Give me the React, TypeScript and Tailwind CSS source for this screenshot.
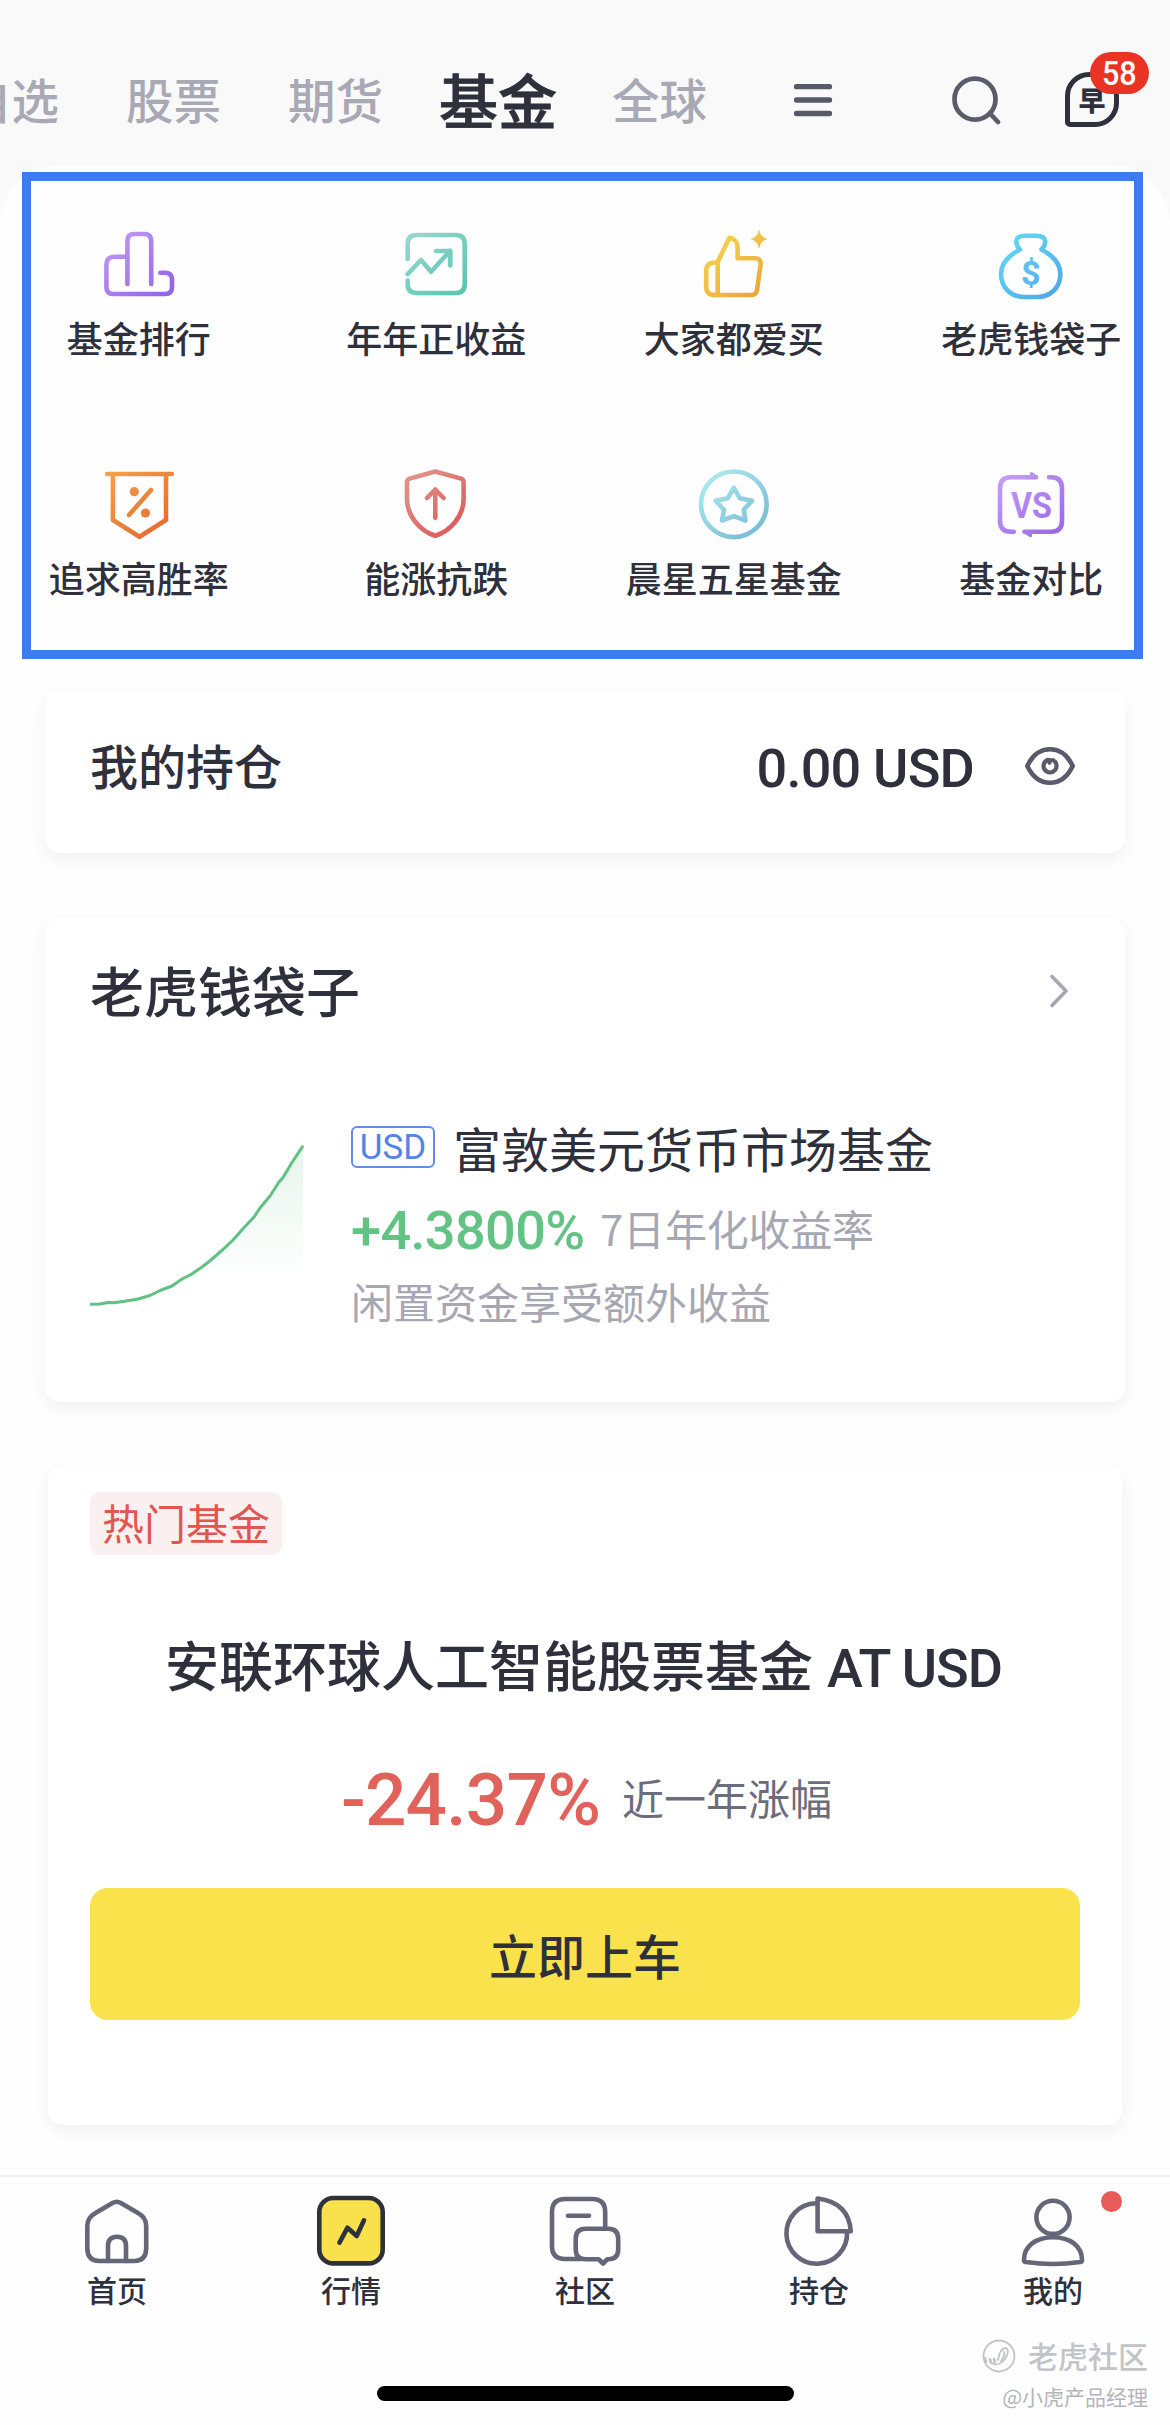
import type { ReactNode } from 'react';

const shortcuts = [
  { label: '基金排行', icon: 'rank', from: '#c09af6', to: '#9463e9' },
  { label: '年年正收益', icon: 'trend', from: '#98d7d0', to: '#56c6af' },
  { label: '大家都爱买', icon: 'thumb', from: '#f6da4e', to: '#eba43b' },
  { label: '老虎钱袋子', icon: 'bag', from: '#63dcf7', to: '#51a7e8' },
  { label: '追求高胜率', icon: 'percent', from: '#f2a04a', to: '#e4692d' },
  { label: '能涨抗跌', icon: 'shield', from: '#e0958c', to: '#dc5454' },
  { label: '晨星五星基金', icon: 'star', from: '#aeeaf1', to: '#74bbd3' },
  { label: '基金对比', icon: 'vs', from: '#c59df9', to: '#9a68e6' },
];

const drawings: Record<string, (paint: string) => ReactNode> = {
  rank: () => (
    <>
      <path d="M28.4 58V15q0-7 7-7h9.800q7 0 7 7V58" />
      <path d="M28.400 30.700H15.400q-8 0-8 8V61q0 7 7 7H66q7 0 7-7V53.700q0-7-7-7H61.300" />
    </>
  ),
  trend: () => (
    <>
      <path d="M11.700 33V18q0-9 9-9h39q9 0 9 9v40q0 9-9 9h-39q-9 0-9-9v-3.500" />
      <path d="M11.700 48 25 34l10 11.700 19.200-21M40 25h14.300v14.500" />
    </>
  ),
  thumb: (paint) => (
    <>
      <path d="M23.700 36 35.200 11.900c5 .5 8.400 4 8.400 9v11.400h17.400q6.300 0 5.600 6.200L63 64q-.6 5-5.600 5H20.700q-8.500 0-8.500-8.500V45q0-8.500 8.500-8.500h3V69" />
      <path d="M65 4.500q1.500 7 8 8.500-6.500 1.500-8 9-1.500-7.500-8-9 6.500-1.500 8-8.500z" fill={paint} stroke={paint} strokeWidth=".6" />
    </>
  ),
  bag: (paint) => (
    <>
      <path d="M29 23.500C23.500 17.500 23.500 9.700 34 9.700h11.500c10.500 0 10.500 7.800 5 13.800C63 30 69.400 38 69.400 48c0 14-10.400 23-23.400 23H33.500C20.500 71 10 62 10 48c0-10 6.500-18 19-24.500z" />
      <text x="39.800" y="59" fontSize="34" fontWeight="700" fontFamily="Roboto" textAnchor="middle" fill={paint} stroke="none">$</text>
    </>
  ),
  percent: (paint) => (
    <>
      <path d="M8.200 8h64.600M13.900 8v46l26.600 16.700L67 54V8M52 24 30 49" />
      <circle cx="35.300" cy="25.700" r="4.600" fill={paint} stroke="none" />
      <circle cx="46.400" cy="47" r="4.600" fill={paint} stroke="none" />
    </>
  ),
  shield: () => (
    <>
      <path d="M39.300 5.500 13.500 12.600q-2.500 1-2.500 3.500V33c0 17 13 32 28.300 36.700C54.500 65 67.600 50 67.600 33V16.100q0-2.500-2.500-3.500z" />
      <path d="M39.300 51.700V24M31 32l8.300-8.500 8.300 8.500" />
    </>
  ),
  star: () => (
    <>
      <circle cx="39.800" cy="38.300" r="32.800" />
      <path d="m39.800 21.700 5.900 10.500 12.300 2.500-8.300 9 1.800 10.800-11.700-4.300-11.700 4.300 1.800-10.800-8.300-9 12.300-2.500z" />
    </>
  ),
  vs: (paint) => (
    <>
      <path d="M45 11.300H20q-11 0-11 11v32.400q0 11 11 11h2.700M58 11.300h2q11 0 11 11v32.400q0 11-11 11H33.400" />
      <path d="M40.500 7.500 45.500 11.300h-5zM33.500 65.700h6v4z" fill={paint} strokeWidth="3" />
      <text x="20" y="52.300" fontSize="36" fontWeight="700" fontFamily="Roboto" textLength="41" lengthAdjust="spacingAndGlyphs" fill={paint} stroke="none">VS</text>
    </>
  ),
};

function ShortcutIcon({ name, from, to }: { name: string; from: string; to: string }) {
  const id = `grad-${name}`;
  const paint = `url(#${id})`;
  return (
    <svg width="80" height="80" viewBox="0 0 80 80" fill="none" stroke={paint} strokeWidth="4.6" strokeLinecap="round" strokeLinejoin="round">
      <defs>
        <linearGradient id={id} gradientUnits="userSpaceOnUse" x1="12" y1="8" x2="66" y2="70">
          <stop offset="0" stopColor={from} />
          <stop offset="1" stopColor={to} />
        </linearGradient>
      </defs>
      {drawings[name](paint)}
    </svg>
  );
}

function Header() {
  return (
    <header className="flex h-[165px] items-start pt-[66px] text-[47.5px] leading-[66px] text-[#a8a9b5]">
      <span className="-ml-[36px] w-24 shrink-0 font-medium">自选</span>
      <span className="ml-[66px] w-24 shrink-0 font-medium">股票</span>
      <span className="ml-[66px] w-24 shrink-0 font-medium">期货</span>
      <span className="ml-[55px] w-[119px] shrink-0 text-[59px] font-medium text-[#2e303b] [-webkit-text-stroke:0.8px_#2e303b]">基金</span>
      <span className="ml-[54px] w-24 shrink-0 font-medium">全球</span>
      <svg className="ml-[84px] mt-[14px] shrink-0" width="42" height="42" viewBox="0 0 42 42" stroke="#575967" strokeWidth="5.300" strokeLinecap="round">
        <path d="M4.500 6.700h33M4.500 20h33M4.500 33.500h33" />
      </svg>
      <svg className="ml-[116px] mt-[8px] shrink-0" width="54" height="54" viewBox="0 0 54 54" fill="none" stroke="#5a5c6b" strokeWidth="4.700" strokeLinecap="round">
        <circle cx="25" cy="25.200" r="20.500" />
        <path d="m40 39.500 8 8.500" />
      </svg>
      <div className="relative ml-[61px] mt-[6px] flex h-[55px] w-[54px] shrink-0 items-center justify-center rounded-[24px] rounded-bl-[5px] border-[5px] border-[#2e303b]">
        <span className="text-[27px] font-black leading-none text-[#2e303b]">早</span>
        <span className="absolute -top-[25px] left-[20px] flex h-[42px] w-[59px] items-center justify-center rounded-full bg-[#ea3323] text-white">
          <b className="scale-x-90 font-[Roboto] text-[34px] font-medium leading-none">58</b>
        </span>
      </div>
    </header>
  );
}

function Shortcuts() {
  return (
    <section className="ml-[22px] mr-[27px] mt-[6px] h-[487px] border-[9px] border-[#3c7cf0]">
      <div className="-ml-[41px] grid w-[1190px] grid-cols-4 gap-y-[80px] pt-[45px]">
        {shortcuts.map((item) => (
          <div key={item.label} className="flex h-[160px] flex-col items-center">
            <ShortcutIcon name={item.icon} from={item.from} to={item.to} />
            <span className="mt-[8px] text-[36px] font-medium leading-[46px]">{item.label}</span>
          </div>
        ))}
      </div>
    </section>
  );
}

function Holdings() {
  return (
    <section className="mx-[45px] mt-[31px] flex h-[163px] items-center rounded-[15px] bg-white pl-[45px] pr-[47px] pb-[12px] shadow-[0_6px_18px_rgba(0,0,0,0.06)]">
      <h2 className="pb-[3px] text-[48px] font-medium">我的持仓</h2>
      <span className="ml-auto pt-[6px] font-[Roboto] text-[54px] font-medium tracking-[-0.8px]">0.00 USD</span>
      <svg className="ml-[48px]" width="56" height="44" viewBox="0 0 56 44" fill="none" stroke="#595b6a" strokeWidth="4.600" strokeLinecap="round">
        <path d="M5.300 22C11 10 19 5.300 28 5.300S45 10 50.700 22C45 34 37 38.700 28 38.700S11 34 5.300 22z" strokeLinejoin="round" />
        <path d="M25.500 16a6.500 6.500 0 1 0 5.500.2M27.500 15.800v3" strokeWidth="4.200" />
      </svg>
    </section>
  );
}

function MoneyBag() {
  return (
    <section className="mx-[45px] mt-[65px] h-[484px] rounded-[15px] bg-white px-[45px] shadow-[0_6px_18px_rgba(0,0,0,0.06)]">
      <div className="flex h-[142px] items-center justify-between pr-[10px]">
        <h2 className="text-[54px] font-medium">老虎钱袋子</h2>
        <svg className="mt-[4px]" width="24" height="40" viewBox="0 0 24 40" fill="none" stroke="#a6a7b3" strokeWidth="3.600" strokeLinecap="round" strokeLinejoin="round">
          <path d="m6 5.500 14 14.500L6 34.500" />
        </svg>
      </div>
      <div className="mt-[62px] flex">
        <svg className="mt-[18px]" width="216" height="170" viewBox="0 0 216 170" fill="none">
          <defs>
            <linearGradient id="fund-fill" x1="0" y1="0" x2="0" y2="1">
              <stop offset="0" stopColor="#62c384" stopOpacity=".16" />
              <stop offset=".85" stopColor="#62c384" stopOpacity="0" />
            </linearGradient>
          </defs>
          <path d="M0 164 33 161.700 63 155 85 145 119 122.700 149 93.300 179 56.700 190 41.700 213 5.700V164z" fill="url(#fund-fill)" />
          <path
            d="M0 164.300 10 164 18 162.500 24 162.800 33 161.500 48 159 60 155.500 70 150.500 82 146 92 139 101 134.500 112 127 121 120 133 109.500 143 100 155 86.500 164 77 170 68 180 56 189 42 193 37.500 202 22.500 213 5.700"
            stroke="#5fc182"
            strokeWidth="3"
            strokeLinejoin="round"
          />
        </svg>
        <div className="ml-[45px]">
          <div className="flex h-[50px] items-center">
            <span className="flex h-[42px] w-[84px] items-center justify-center rounded-[6px] border-2 border-[#648bea] font-[Roboto] text-[35px] leading-none text-[#5482e8]">USD</span>
            <span className="ml-[18px] text-[48px] leading-[50px]">富敦美元货币市场基金</span>
          </div>
          <div className="mt-[32px] flex h-[50px] items-center">
            <span className="w-[249px] pt-[4px] font-[Roboto] text-[54px] font-medium leading-none tracking-[-0.6px] text-[#62c384]">+4.3800%</span>
            <span className="pb-[2px] text-[42px] leading-none tracking-[-0.2px] text-[#a6a7b3]">7日年化收益率</span>
          </div>
          <p className="mt-[20px] text-[42px] leading-[54px] text-[#a6a7b3]">闲置资金享受额外收益</p>
        </div>
      </div>
    </section>
  );
}

function HotFund() {
  return (
    <section className="mx-[48px] mt-[63px] flex h-[660px] flex-col items-center rounded-[15px] bg-white px-[42px] pt-[27px] shadow-[0_6px_18px_rgba(0,0,0,0.06)]">
      <span className="flex h-[63px] w-[192px] items-center justify-center self-start rounded-[10px] bg-[#fbf0f0] pb-[4px] text-[42px] leading-none text-[#e25551]">热门基金</span>
      <h2 className="mr-[3px] mt-[76px] flex items-baseline whitespace-nowrap text-[54px] font-medium leading-[66px]">
        安联环球人工智能股票基金
        <span className="ml-[14px] font-[Roboto] tracking-[-1px]">AT USD</span>
      </h2>
      <div className="ml-[3px] mt-[60px] flex h-[76px] items-center">
        <span className="font-[Roboto] text-[73px] font-medium leading-none tracking-[-0.8px] text-[#e0625b]">-24.37%</span>
        <span className="ml-[22px] pb-[6px] text-[42px] leading-none text-[#6b6d7c]">近一年涨幅</span>
      </div>
      <button className="mt-[50px] h-[132px] w-[990px] rounded-[18px] bg-[#fae24c] text-[48px] font-medium leading-none">立即上车</button>
    </section>
  );
}

const tabs: { label: string; icon: ReactNode }[] = [
  {
    label: '首页',
    icon: (
      <>
        <path d="M35.500 13q4.200-2.500 8.400 0L61 23q8.200 4.500 8.200 13v22q0 13-12 13H22.300q-12 0-12-13V36q0-8.500 8.200-13z" />
        <path d="M31 71V56q0-9.300 9-9.300T49 56v15" />
      </>
    ),
  },
  {
    label: '行情',
    icon: (
      <>
        <rect x="8.300" y="8" width="63.400" height="65.400" rx="14" fill="#f8e14b" stroke="#2e303b" />
        <path d="m28.500 52.700 8-15 9.200 8.300L53 30.300" stroke="#2e303b" />
      </>
    ),
  },
  {
    label: '社区',
    icon: (
      <>
        <path d="M60.200 38.700V22q0-13-13-13H20Q7 9 7 22v34q0 13 13 13h16M23 25.700h21" />
        <path d="M40.700 38.700h22.500q10 0 10 10v10.600q0 10-10 10h-1L58 73.500l-4.200-4.200H40.700q-10 0-10-10V48.700q0-10 10-10z" />
      </>
    ),
  },
  {
    label: '持仓',
    icon: (
      <>
        <path d="M36.700 13.200A30.300 30.300 0 1 0 68 42" />
        <path d="M38.600 8.500v32.800h33.200Q70 12.500 38.600 8.500z" />
      </>
    ),
  },
  {
    label: '我的',
    icon: (
      <>
        <circle cx="40" cy="27.300" r="16.600" />
        <path d="M11 70c0-14 12-22.700 29-22.700S69 56 69 70q0 1.700-1.700 2-27.300 4-54.600 0Q11 71.700 11 70z" />
      </>
    ),
  },
];

function TabBar() {
  return (
    <nav className="mt-[50px] grid grid-cols-5 border-t-2 border-[#f0f0f2] pt-[13px]">
      {tabs.map((tab) => (
        <div key={tab.label} className="relative flex flex-col items-center">
          <svg width="80" height="80" viewBox="0 0 80 80" fill="none" stroke="#656778" strokeWidth="4.600" strokeLinecap="round" strokeLinejoin="round">
            {tab.icon}
          </svg>
          <span className="mt-[2px] text-[30px] font-medium leading-[34px]">{tab.label}</span>
          {tab.label === '我的' && <i className="absolute right-[48px] top-[1px] size-[21px] rounded-full bg-[#e85b58]" />}
        </div>
      ))}
    </nav>
  );
}

export default function App() {
  return (
    <div className="relative h-[2425px] w-[1170px] overflow-hidden bg-[#f9f9fa] font-['Noto_Sans_CJK_SC',sans-serif] text-[#2e303b]">
      <Header />
      <main className="h-[2260px] rounded-t-[60px] bg-[#fefefe] pt-px">
        <Shortcuts />
        <Holdings />
        <MoneyBag />
        <HotFund />
        <TabBar />
        <div className="mx-auto mt-[80px] h-[15px] w-[417px] rounded-full bg-black" />
      </main>
      <div className="absolute right-[22px] top-[2336px] flex flex-col items-end text-[#c3c4c9]">
        <div className="flex items-center text-[30px] font-medium leading-[38px]">
          <svg className="mr-[12px]" width="34" height="38" viewBox="0 0 34 38" fill="none" stroke="#c3c4c9" strokeWidth="1.800" strokeLinecap="round">
            <circle cx="17" cy="20" r="15.500" />
            <path d="M16 24c1-7 4-12 8-12 3 1 2 7-1 11-4 5-9 7-13 4M22 16c1 2 0 6-3 9" />
            <path d="m3 22 1 4M8 23l1 4M12 23l1 3" strokeWidth="2.600" />
          </svg>
          老虎社区
        </div>
        <span className="mt-[8px] text-[21px] leading-[28px] text-[#b4b5ba]">@小虎产品经理</span>
      </div>
    </div>
  );
}
